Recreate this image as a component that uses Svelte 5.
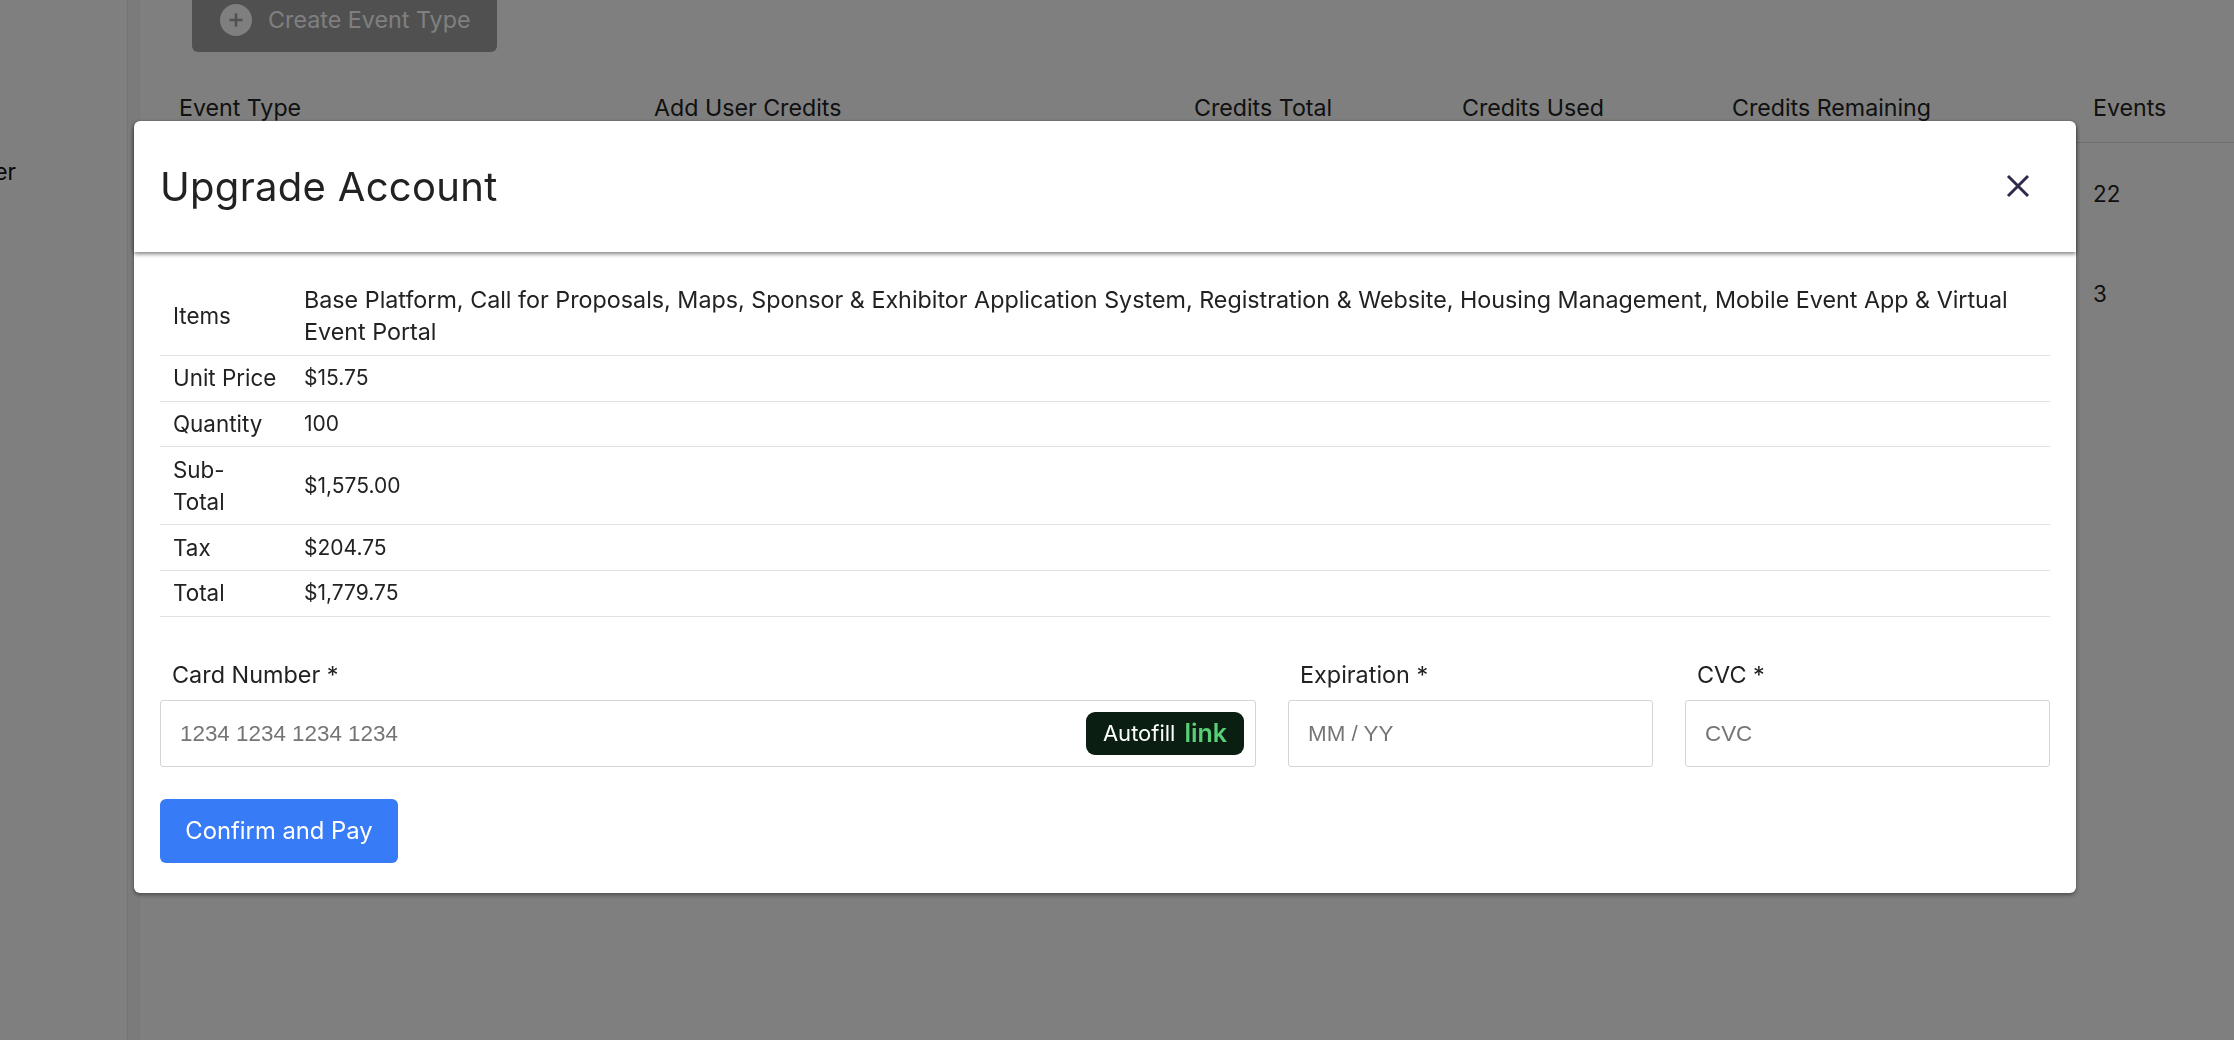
<script>
  const rows = [
    ['Items', 'Base Platform, Call for Proposals, Maps, Sponsor & Exhibitor Application System, Registration & Website, Housing Management, Mobile Event App & Virtual Event Portal', 'long'],
    ['Unit Price', '$15.75', ''],
    ['Quantity', '100', ''],
    ['Sub-\nTotal', '$1,575.00', ''],
    ['Tax', '$204.75', ''],
    ['Total', '$1,779.75', '']
  ];
  const cols = ['Event Type', 'Add User Credits', 'Credits Total', 'Credits Used', 'Credits Remaining', 'Events'];
</script>

<div class="page">
  <aside class="side"><span class="sidelabel">User</span></aside>
  <div class="rail"></div>
  <main class="main">
    <button class="create">
      <span class="plus"><svg width="16" height="16" viewBox="0 0 16 16"><path d="M8 1.5v13M1.5 8h13" stroke="#a0a0a0" stroke-width="2.6" /></svg></span>
      <span class="createlabel">Create Event Type</span>
    </button>
    <div class="thead">
      {#each cols as c}<div>{c}</div>{/each}
    </div>
    <div class="tbody"><div class="num">22</div><div class="num">3</div></div>
  </main>
</div>

<div class="overlay">
  <div class="modal">
    <header class="head">
      <h2>Upgrade Account</h2>
      <svg class="close" width="24" height="24" viewBox="0 0 24 24"><path d="M2 2l20 20M22 2L2 22" stroke="#2d2a4a" stroke-width="3" fill="none" /></svg>
    </header>
    <div class="body">
      <table>
        <tbody>
          {#each rows as r}
            <tr><td class="k">{r[0]}</td><td class="v {r[2]}">{r[1]}</td></tr>
          {/each}
        </tbody>
      </table>
      <div class="fields">
        <div class="field card">
          <span class="label">Card Number *</span>
          <div class="input">
            <span class="ph">1234 1234 1234 1234</span>
            <span class="autofill">Autofill <b>link</b></span>
          </div>
        </div>
        <div class="field exp">
          <span class="label">Expiration *</span>
          <div class="input"><span class="ph">MM / YY</span></div>
        </div>
        <div class="field cvc">
          <span class="label">CVC *</span>
          <div class="input"><span class="ph">CVC</span></div>
        </div>
      </div>
      <button class="pay">Confirm and Pay</button>
    </div>
  </div>
</div>

<style>
  :global(body) { margin: 0; background: #fff; font-family: Inter, "Noto Sans", sans-serif; color: #333; overflow: hidden; }
  .page { display: flex; height: 1040px; overflow: hidden; background: #fff; }
  .side { width: 127px; flex: none; padding-top: 159px; overflow: hidden; font-size: 22.4px; line-height: 26px; }
  .sidelabel { display: block; margin-left: -34px; color: #111; }
  .rail { width: 13px; flex: none; background: #f6f6f6; border-left: 1px solid #e8e8e8; border-right: 1px solid #f0f0f0; box-sizing: border-box; }
  .main { flex: 1; min-width: 0; display: flex; flex-direction: column; align-items: flex-start; }
  .create { margin: -12px 0 0 52px; width: 305px; height: 64px; box-sizing: border-box; border: 0; border-radius: 6px; background: #a0a0a0; color: #fff; font: 400 23.3px Inter, sans-serif; display: flex; align-items: center; gap: 16px; padding: 0 0 0 28px; }
  .createlabel { margin-top: -2px; }
  .plus { width: 32px; height: 32px; border-radius: 50%; background: #fff; display: flex; align-items: center; justify-content: center; }
  .thead { margin-top: 43px; align-self: stretch; display: grid; grid-template-columns: 475px 540px 268px 270px 361px 1fr; padding-left: 39px; height: 47px; border-bottom: 1px solid #ddd; font-size: 23.2px; line-height: 26px; color: #222; }
  .tbody { align-self: stretch; padding-left: 1953px; font-size: 22.4px; line-height: 26px; color: #222; }
  .num { height: 100px; padding-top: 38px; box-sizing: border-box; }
  .overlay { position: fixed; inset: 0; background: rgba(0, 0, 0, 0.5); }
  .modal { margin: 121px 0 0 134px; width: 1942px; height: 772px; background: #fff; border-radius: 6px; box-shadow: 0 2px 4px rgba(0, 0, 0, 0.4); display: flex; flex-direction: column; color: #222; font-size: 22.4px; }
  .head { height: 131px; flex: none; display: flex; align-items: center; justify-content: space-between; padding: 0 46px 0 26px; box-shadow: 0 2px 4px rgba(0, 0, 0, 0.5); border-radius: 6px 6px 0 0; }
  h2 { margin: 0; font-weight: 400; font-size: 40px; letter-spacing: 0.3px; color: #222; }
  .close { margin-top: -2px; }
  .body { padding: 26px 26px 0; flex: 1; }
  table { width: 100%; border-collapse: collapse; line-height: 32px; }
  td { padding: 6.4px 13px; border-bottom: 1px solid #e2e2e2; vertical-align: middle; }
  td.k { width: 105px; white-space: pre; }
  td.v { font-size: 21px; }
  td.v.long { font-size: 23.3px; }
  .fields { margin-top: 42px; display: flex; gap: 32px; }
  .card { width: 1096px; }
  .exp { width: 365px; }
  .cvc { width: 365px; }
  .label { display: block; padding-left: 12px; line-height: 32px; margin-bottom: 9px; font-size: 23.4px; }
  .input { height: 67px; box-sizing: border-box; border: 1px solid #d5d5d5; border-radius: 3px; padding: 0 11px 0 19px; display: flex; align-items: center; justify-content: space-between; }
  .ph { font: 22.4px "Liberation Sans", Arial, sans-serif; color: #757575; margin-top: 2px; }
  .autofill { width: 158px; height: 43px; box-sizing: border-box; background: #0a1f12; border-radius: 9px; color: #fff; font-size: 22px; display: flex; align-items: center; justify-content: center; gap: 9px; }
  .autofill b { color: #58cf76; font-weight: 600; font-size: 25px; }
  .pay { display: block; margin-top: 32px; width: 238px; height: 64px; border: 0; border-radius: 6px; background: #387bf6; color: #fff; font: 400 23.8px Inter, sans-serif; }
</style>
